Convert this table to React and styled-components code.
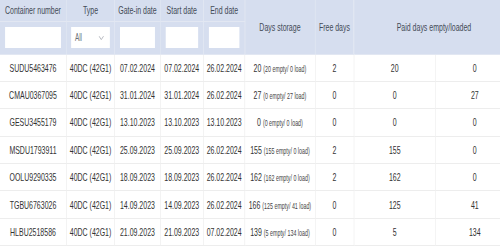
import styled, { createGlobalStyle } from "styled-components";

// the table is laid out at full width, then squeezed horizontally like the reference
const SQUEEZE = 0.635;

const rows = [
    { id: "SUDU5463476", type: "40DC (42G1)", gateIn: "07.02.2024", start: "07.02.2024", end: "26.02.2024", days: 20, empty: 20, load: 0, free: 2, paidEmpty: 20, paidLoad: 0 },
    { id: "CMAU0367095", type: "40DC (42G1)", gateIn: "31.01.2024", start: "31.01.2024", end: "26.02.2024", days: 27, empty: 0, load: 27, free: 0, paidEmpty: 0, paidLoad: 27 },
    { id: "GESU3455179", type: "40DC (42G1)", gateIn: "13.10.2023", start: "13.10.2023", end: "13.10.2023", days: 0, empty: 0, load: 0, free: 0, paidEmpty: 0, paidLoad: 0 },
    { id: "MSDU1793911", type: "40DC (42G1)", gateIn: "25.09.2023", start: "25.09.2023", end: "26.02.2024", days: 155, empty: 155, load: 0, free: 2, paidEmpty: 155, paidLoad: 0 },
    { id: "OOLU9290335", type: "40DC (42G1)", gateIn: "18.09.2023", start: "18.09.2023", end: "26.02.2024", days: 162, empty: 162, load: 0, free: 2, paidEmpty: 162, paidLoad: 0 },
    { id: "TGBU6763026", type: "40DC (42G1)", gateIn: "14.09.2023", start: "14.09.2023", end: "26.02.2024", days: 166, empty: 125, load: 41, free: 0, paidEmpty: 125, paidLoad: 41 },
    { id: "HLBU2518586", type: "40DC (42G1)", gateIn: "21.09.2023", start: "21.09.2023", end: "07.02.2024", days: 139, empty: 5, load: 134, free: 0, paidEmpty: 5, paidLoad: 134 },
];

const columns = [104, 76, 71, 68, 65, 110, 61, 128, 123];

export default function App() {
    return (
        <>
            <GlobalStyle />
            <Page>
                <Squeeze>
                    <Table>
                        <colgroup>
                            {columns.map((w, i) => <col key={i} style={{ width: w }} />)}
                        </colgroup>
                        <thead>
                            <TitleRow>
                                <Th>Container number</Th>
                                <Th>Type</Th>
                                <Th>Gate-in date</Th>
                                <Th>Start date</Th>
                                <Th>End date</Th>
                                <Th rowSpan={2}>Days storage</Th>
                                <Th rowSpan={2}>Free days</Th>
                                <Th rowSpan={2} colSpan={2}>Paid days empty/loaded</Th>
                            </TitleRow>
                            <FilterRow>
                                <FilterCell><TextFilter /></FilterCell>
                                <FilterCell $narrow>
                                    <SelectFilter>
                                        <span>All</span>
                                        <svg width="9" height="6" viewBox="0 0 9 6">
                                            <path d="M1 1.2 L4.5 4.6 L8 1.2" fill="none" stroke="#a9adb5" strokeWidth="1" />
                                        </svg>
                                    </SelectFilter>
                                </FilterCell>
                                <FilterCell><TextFilter /></FilterCell>
                                <FilterCell><TextFilter /></FilterCell>
                                <FilterCell><TextFilter /></FilterCell>
                            </FilterRow>
                        </thead>
                        <tbody>
                            {rows.map(row => (
                                <Row key={row.id}>
                                    <Td>{row.id}</Td>
                                    <Td>{row.type}</Td>
                                    <Td>{row.gateIn}</Td>
                                    <Td>{row.start}</Td>
                                    <Td>{row.end}</Td>
                                    <Td>
                                        {row.days} <Detail>({row.empty} empty/ {row.load} load)</Detail>
                                    </Td>
                                    <Td>{row.free}</Td>
                                    <Td>{row.paidEmpty}</Td>
                                    <Td>{row.paidLoad}</Td>
                                </Row>
                            ))}
                        </tbody>
                    </Table>
                </Squeeze>
            </Page>
        </>
    );
}

const GlobalStyle = createGlobalStyle`
    body {
        margin: 0;
        background-color: #FFFFFF;
        overflow: hidden;
    }
`

const Page = styled.div`
    width: 500px;
    height: 250px;
    overflow: hidden;
`

const Squeeze = styled.div`
    width: 810px;
    transform: scaleX(${SQUEEZE});
    transform-origin: 0 0;
`

const Table = styled.table`
    width: 810px;
    table-layout: fixed;
    border-collapse: collapse;
    font-family: "Liberation Sans", Arial, sans-serif;
    font-size: 11px;
    color: #333333;
`

const TitleRow = styled.tr`
    height: 21px;
`

const FilterRow = styled.tr`
    height: 33px;
`

const Th = styled.th`
    font-weight: 400;
    color: #444B57;
    text-align: center;
    vertical-align: middle;
    padding: 0;
    background-color: #D6DEEF;
    border: 1px solid #E2E7F2;
    border-top: none;
    white-space: nowrap;
    &:first-child {
        border-left: none;
    }
`

const FilterCell = styled.td`
    padding: 0 ${props => props.$narrow ? 7 : 8}px;
    background-color: #D6DEEF;
    border: 1px solid #E2E7F2;
    border-top: none;
    &:first-child {
        border-left: none;
    }
`

const TextFilter = styled.div`
    height: 21px;
    background-color: #FFFFFF;
`

const SelectFilter = styled.div`
    display: flex;
    align-items: center;
    justify-content: space-between;
    height: 21px;
    padding: 0 9px 0 6px;
    background-color: #FFFFFF;
    font-size: 10px;
    color: #6B6F76;
`

const Row = styled.tr`
    height: 27.4px;
`

const Td = styled.td`
    padding: 0;
    text-align: center;
    vertical-align: middle;
    white-space: nowrap;
    border: 1px solid #EDEDED;
    border-top: none;
    &:first-child {
        border-left: none;
    }
`

const Detail = styled.span`
    font-size: 8.4px;
    color: #444444;
`
